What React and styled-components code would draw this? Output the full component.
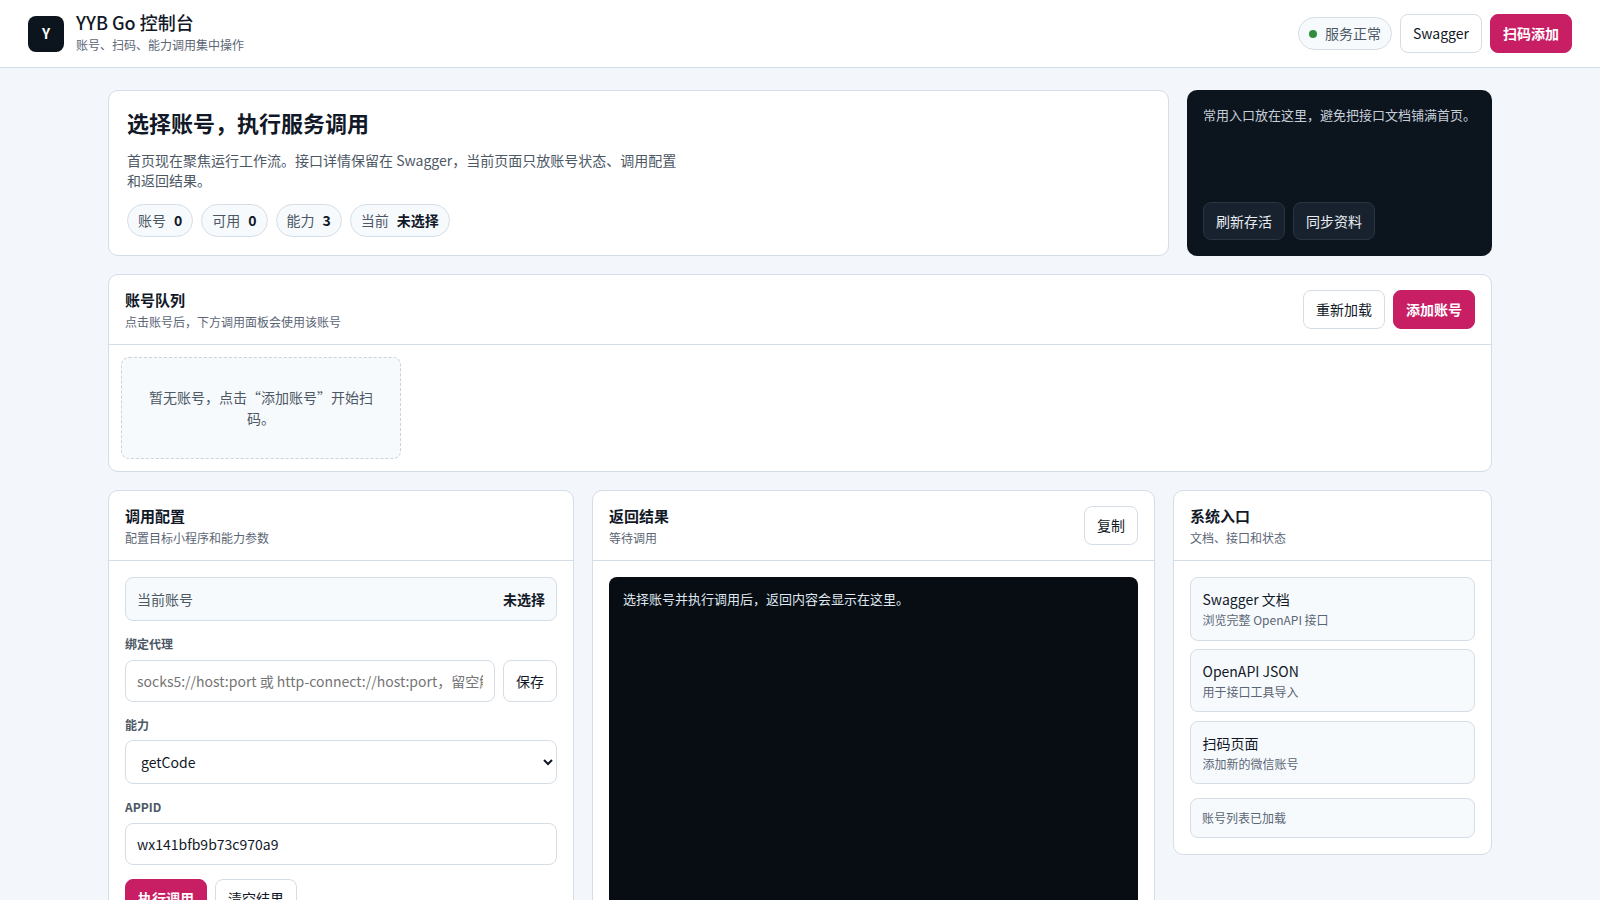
import React from 'react';
import styled, { createGlobalStyle } from 'styled-components';

const GlobalStyle = createGlobalStyle`
  * {
    box-sizing: border-box;
  }

  body {
    margin: 0;
    background-color: #f3f6fa;
    color: #111827;
    font-family: "Noto Sans CJK SC", "Noto Sans", sans-serif;
    font-size: 14px;
    line-height: 1.5;
  }
`;

const Topbar = styled.header`
  height: 68px;
  padding: 0 28px;
  display: flex;
  align-items: center;
  justify-content: space-between;
  background-color: white;
  border-bottom: 1px solid #d5dde6;
`;

const Brand = styled.div`
  display: flex;
  align-items: center;
  gap: 12px;
`;

const BrandText = styled.div`
  padding-bottom: 4px;
`;

const Logo = styled.div`
  width: 36px;
  height: 36px;
  border-radius: 8px;
  background-color: #0c141e;
  color: white;
  display: flex;
  align-items: center;
  justify-content: center;
  font-size: 14px;
  font-weight: 700;
`;

const BrandName = styled.div`
  font-size: 18px;
  font-weight: 500;
  line-height: 27px;
`;

const Muted = styled.div`
  font-size: 12px;
  line-height: 18px;
  color: #5b6675;
`;

const Row = styled.div`
  display: flex;
  align-items: center;
  gap: 8px;
`;

const Status = styled.div`
  height: 33px;
  padding: 0 10px;
  display: flex;
  align-items: center;
  gap: 8px;
  border: 1px solid #d5dde6;
  border-radius: 17px;
  background-color: #f7fafd;
  color: #4d5865;
`;

const Dot = styled.span`
  width: 8px;
  height: 8px;
  border-radius: 50%;
  background-color: #2f8f3e;
`;

const Button = styled.button`
  height: 39px;
  padding: 0 12px 1px;
  border: 1px solid ${(p) => (p.$primary ? '#c81e64' : '#d5dde6')};
  border-radius: 8px;
  background-color: ${(p) => (p.$primary ? '#c81e64' : 'white')};
  color: ${(p) => (p.$primary ? 'white' : '#111827')};
  font-family: inherit;
  font-size: 14px;
  font-weight: ${(p) => (p.$primary ? 700 : 400)};
  white-space: nowrap;
`;

const DarkButton = styled(Button)`
  height: 38px;
  padding: 0 12px;
  background-color: #18222e;
  border-color: #283442;
  color: #e8edf3;
`;

const Main = styled.main`
  width: 1384px;
  margin: 0 auto;
  padding: 22px 0;
  display: flex;
  flex-direction: column;
  gap: 18px;
`;

const HeroGrid = styled.section`
  display: grid;
  grid-template-columns: 1fr 305px;
  gap: 18px;
`;

const Card = styled.section`
  background-color: white;
  border: 1px solid #d5dde6;
  border-radius: 10px;
`;

const Hero = styled(Card)`
  height: 166px;
  padding: 15px 18px;
`;

const HeroTitle = styled.h1`
  margin: 0;
  font-size: 22px;
  font-weight: 700;
  line-height: 33px;
`;

const HeroText = styled.p`
  width: 560px;
  margin: 11px 0 0;
  font-size: 14px;
  line-height: 20px;
  color: #4d5865;
`;

const Chips = styled(Row)`
  margin-top: 14px;
`;

const Chip = styled.div`
  height: 33px;
  padding: 0 10px;
  display: flex;
  align-items: center;
  gap: 8px;
  border: 1px solid #d5dde6;
  border-radius: 17px;
  background-color: #f7fafd;
  color: #4d5865;

  b {
    color: #111827;
    font-weight: 700;
  }
`;

const Shortcut = styled.aside`
  height: 166px;
  padding: 15px 16px 16px;
  display: flex;
  flex-direction: column;
  justify-content: space-between;
  border-radius: 10px;
  background-color: #0c141e;
  color: #c5ced8;
  font-size: 13px;
  line-height: 20px;
`;

const CardHead = styled.div`
  height: 70px;
  padding: 0 16px;
  display: flex;
  align-items: center;
  justify-content: space-between;
  border-bottom: 1px solid #d5dde6;
`;

const CardTitle = styled.h2`
  margin: 0 0 2px;
  font-size: 15px;
  font-weight: 700;
  line-height: 22px;
`;

const QueueBody = styled.div`
  padding: 12px;
`;

const Empty = styled.div`
  width: 280px;
  height: 102px;
  padding: 0 24px;
  display: flex;
  align-items: center;
  justify-content: center;
  text-align: center;
  border: 1px dashed #c9d3de;
  border-radius: 8px;
  background-color: #f7fafd;
  color: #4d5865;
`;

const Columns = styled.section`
  display: grid;
  grid-template-columns: 466px 1fr 319px;
  gap: 18px;
  align-items: start;
`;

const CardBody = styled.div`
  padding: 16px;
`;

const CurrentBox = styled.div`
  height: 44px;
  padding: 0 11px;
  display: flex;
  align-items: center;
  justify-content: space-between;
  border: 1px solid #d5dde6;
  border-radius: 8px;
  background-color: #f7fafd;
  color: #4d5865;

  b {
    color: #111827;
    font-weight: 700;
  }
`;

const Label = styled.label`
  display: block;
  margin: 14px 0 6.5px;
  font-size: 12px;
  font-weight: 700;
  line-height: 18px;
  color: #4d5865;
`;

const Input = styled.input`
  width: 100%;
  min-width: 0;
  height: 42px;
  padding: 0 11px;
  border: 1px solid #d5dde6;
  border-radius: 8px;
  background-color: white;
  color: #111827;
  font-family: inherit;
  font-size: 14px;
  outline: none;
`;

const Select = styled.select`
  width: 100%;
  height: 44px;
  padding: 0 11px;
  border: 1px solid #d5dde6;
  border-radius: 8px;
  background-color: white;
  color: #111827;
  font-family: inherit;
  font-size: 14px;
`;

const InputRow = styled.div`
  display: flex;
  gap: 8px;
`;

const SaveButton = styled(Button)`
  flex: none;
  width: 54px;
  height: 42px;
  padding: 0 12px;
`;

const Actions = styled(Row)`
  margin-top: 14px;
`;

const Output = styled.pre`
  height: 520px;
  margin: 0;
  padding: 12px 14px;
  border-radius: 8px;
  background-color: #080d14;
  color: #dfe6ee;
  font-family: inherit;
  font-size: 13px;
  line-height: 20px;
`;

const LinkList = styled.div`
  display: flex;
  flex-direction: column;
  gap: 8.4px;
`;

const LinkItem = styled.a`
  height: 63.5px;
  padding: 10px 11.5px;
  display: block;
  border: 1px solid #d5dde6;
  border-radius: 8px;
  background-color: #f7fafd;
  color: #111827;
  line-height: 23px;
`;

const StatusLine = styled.div`
  height: 40px;
  margin-top: 13.7px;
  padding: 0 11px;
  display: flex;
  align-items: center;
  border: 1px solid #d5dde6;
  border-radius: 8px;
  background-color: #f7fafd;
  font-size: 12px;
  color: #5b6675;
`;

const links = [
  ['Swagger 文档', '浏览完整 OpenAPI 接口'],
  ['OpenAPI JSON', '用于接口工具导入'],
  ['扫码页面', '添加新的微信账号'],
];

const stats = [
  ['账号', '0'],
  ['可用', '0'],
  ['能力', '3'],
  ['当前', '未选择'],
];

export default function App() {
  return (
    <>
      <GlobalStyle />
      <Topbar>
        <Brand>
          <Logo>Y</Logo>
          <BrandText>
            <BrandName>YYB Go 控制台</BrandName>
            <Muted>账号、扫码、能力调用集中操作</Muted>
          </BrandText>
        </Brand>
        <Row>
          <Status>
            <Dot />
            服务正常
          </Status>
          <Button>Swagger</Button>
          <Button $primary>扫码添加</Button>
        </Row>
      </Topbar>
      <Main>
        <HeroGrid>
          <Hero>
            <HeroTitle>选择账号，执行服务调用</HeroTitle>
            <HeroText>
              首页现在聚焦运行工作流。接口详情保留在 Swagger，当前页面只放账号状态、调用配置和返回结果。
            </HeroText>
            <Chips>
              {stats.map(([name, value]) => (
                <Chip key={name}>
                  {name} <b>{value}</b>
                </Chip>
              ))}
            </Chips>
          </Hero>
          <Shortcut>
            常用入口放在这里，避免把接口文档铺满首页。
            <Row>
              <DarkButton>刷新存活</DarkButton>
              <DarkButton>同步资料</DarkButton>
            </Row>
          </Shortcut>
        </HeroGrid>

        <Card>
          <CardHead>
            <div>
              <CardTitle>账号队列</CardTitle>
              <Muted>点击账号后，下方调用面板会使用该账号</Muted>
            </div>
            <Row>
              <Button>重新加载</Button>
              <Button $primary>添加账号</Button>
            </Row>
          </CardHead>
          <QueueBody>
            <Empty>暂无账号，点击“添加账号”开始扫码。</Empty>
          </QueueBody>
        </Card>

        <Columns>
          <Card>
            <CardHead>
              <div>
                <CardTitle>调用配置</CardTitle>
                <Muted>配置目标小程序和能力参数</Muted>
              </div>
            </CardHead>
            <CardBody>
              <CurrentBox>
                当前账号
                <b>未选择</b>
              </CurrentBox>
              <Label>绑定代理</Label>
              <InputRow>
                <Input placeholder="socks5://host:port 或 http-connect://host:port，留空解除绑定" />
                <SaveButton>保存</SaveButton>
              </InputRow>
              <Label>能力</Label>
              <Select defaultValue="getCode">
                <option value="getCode">getCode</option>
              </Select>
              <Label>APPID</Label>
              <Input defaultValue="wx141bfb9b73c970a9" />
              <Actions>
                <Button $primary>执行调用</Button>
                <Button>清空结果</Button>
              </Actions>
            </CardBody>
          </Card>

          <Card>
            <CardHead>
              <div>
                <CardTitle>返回结果</CardTitle>
                <Muted>等待调用</Muted>
              </div>
              <Button>复制</Button>
            </CardHead>
            <CardBody>
              <Output>选择账号并执行调用后，返回内容会显示在这里。</Output>
            </CardBody>
          </Card>

          <Card>
            <CardHead>
              <div>
                <CardTitle>系统入口</CardTitle>
                <Muted>文档、接口和状态</Muted>
              </div>
            </CardHead>
            <CardBody>
              <LinkList>
                {links.map(([title, note]) => (
                  <LinkItem key={title}>
                    {title}
                    <Muted>{note}</Muted>
                  </LinkItem>
                ))}
              </LinkList>
              <StatusLine>账号列表已加载</StatusLine>
            </CardBody>
          </Card>
        </Columns>
      </Main>
    </>
  );
}
